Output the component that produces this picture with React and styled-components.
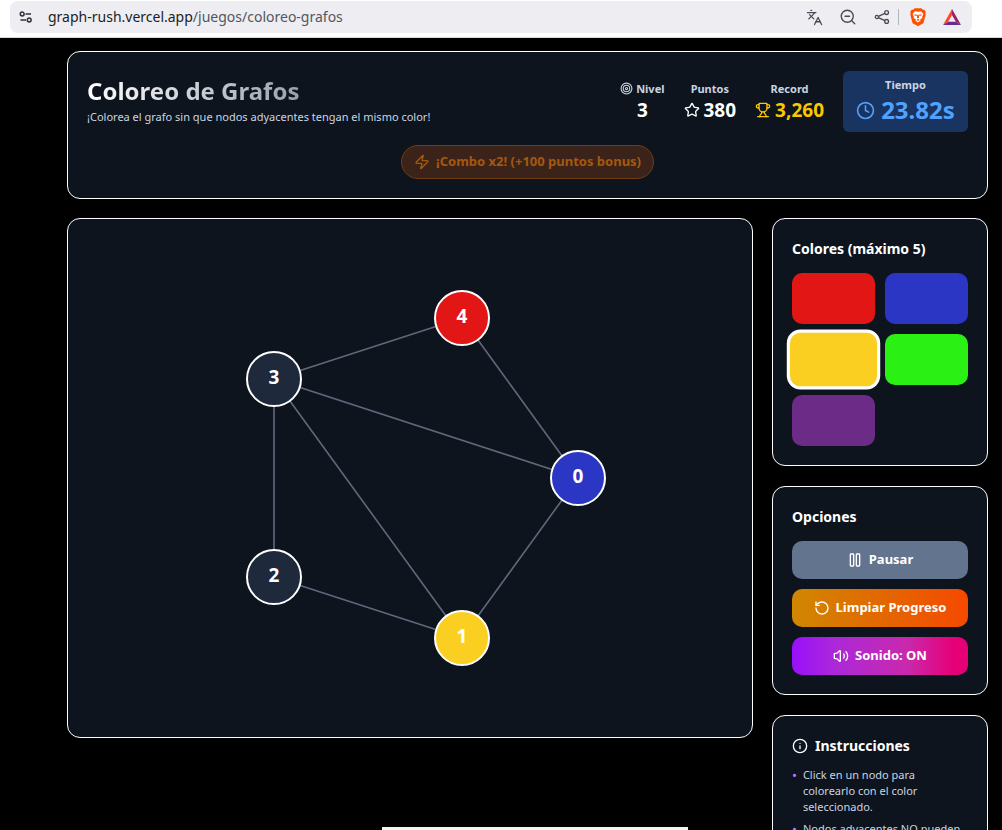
import React, { useState } from "react";
import styled, { createGlobalStyle, css } from "styled-components";
import {
  Target, Star, Trophy, Clock, Zap, Pause, RotateCcw, Volume2, Info,
  Languages, ZoomOut,
} from "lucide-react";

const GlobalStyle = createGlobalStyle`
  *, *::before, *::after { box-sizing: border-box; }
  body {
    margin: 0;
    background: #000;
    color: #fff;
    font-family: "Noto Sans", "Liberation Sans", sans-serif;
  }
  h1, h2, p, ul { margin: 0; padding: 0; }
  button { font: inherit; color: inherit; border: 0; padding: 0; cursor: pointer; }
  svg { flex: none; }
`;

const Screen = styled.div`
  position: relative;
  height: 100vh;
  overflow: hidden;
`;

const BrowserBar = styled.header`
  height: 38px;
  padding: 1px 30px 4px 10px;
  background: #fff;
  border-bottom: 1px solid #d8d8dc;
`;

const Address = styled.div`
  display: flex;
  align-items: center;
  height: 32px;
  padding: 0 12px 0 8px;
  border-radius: 8px;
  background: #ededf2;
  color: #4a4b52;
`;

const BarButton = styled.button`
  display: flex;
  align-items: center;
  justify-content: center;
  width: 16px;
  height: 24px;
  background: none;
`;

const Url = styled.a`
  flex: 1;
  margin-left: 14px;
  font-size: 14px;
  line-height: 20px;
  color: #55565d;
  text-decoration: none;
`;

const Host = styled.span`
  color: #1c1d22;
`;

const BarActions = styled.div`
  display: flex;
  align-items: center;
  gap: 18px;
`;

const BraveGroup = styled.div`
  display: flex;
  align-items: center;
  gap: 18px;
  height: 16px;
  margin-left: -10px;
  padding-left: 11px;
  border-left: 1px solid #b4b4bb;
`;

const Page = styled.main`
  display: flex;
  flex-direction: column;
  gap: 19px;
  padding: 13px 14px 0 67px;
`;

const Card = styled.section`
  border: 1px solid #fff;
  border-radius: 13px;
  background: #0d141d;
`;

const HeaderCard = styled(Card)`
  display: flex;
  flex-direction: column;
  gap: 13px;
  padding: 19px;
`;

const HeaderRow = styled.div`
  display: flex;
  align-items: center;
  justify-content: space-between;
`;

const Title = styled.h1`
  width: fit-content;
  font-size: 24px;
  line-height: 30px;
  font-weight: 700;
  background: linear-gradient(90deg, #fff, #99a1af);
  background-clip: text;
  color: transparent;
`;

const Subtitle = styled.p`
  font-size: 11px;
  line-height: 22px;
  color: #cad5e2;
`;

const Stats = styled.div`
  display: flex;
  align-items: center;
  gap: 19px;
`;

const Stat = styled.div`
  display: flex;
  flex-direction: column;
  align-items: center;
`;

const StatLabel = styled.div`
  display: flex;
  align-items: center;
  gap: 3px;
  font-size: 11px;
  line-height: 16px;
  font-weight: 700;
  color: #cad5e2;
`;

const StatValue = styled.div`
  display: flex;
  align-items: center;
  gap: 4px;
  font-size: 19px;
  line-height: 26px;
  font-weight: 700;
  color: ${(p) => p.$color || "#fff"};
`;

const Timer = styled(Stat)`
  min-width: 125px;
  padding: 6px 12px 5px;
  border-radius: 6px;
  background: #1a3461;
`;

const TimerValue = styled(StatValue)`
  gap: 6px;
  font-size: 24px;
  line-height: 34px;
  color: #51a2ff;
`;

const Combo = styled.div`
  display: flex;
  align-items: center;
  align-self: center;
  gap: 6px;
  height: 34px;
  padding: 0 12px;
  border: 1px solid #713c10;
  border-radius: 17px;
  background: #3c231a;
  color: #a4590f;
  font-size: 13px;
  line-height: 18px;
  font-weight: 700;
`;

const Caption = styled.span`
  padding-bottom: 2px;
`;

const Columns = styled.div`
  display: grid;
  grid-template-columns: 1fr 216px;
  gap: 19px;
  align-items: start;
`;

const Board = styled(Card)`
  position: relative;
  height: 520px;
`;

const Edges = styled.svg`
  position: absolute;
  left: 50%;
  top: 50%;
  width: 2px;
  height: 2px;
  overflow: visible;
  stroke: #62687c;
  stroke-width: 1.6;
`;

const Node = styled.button`
  position: absolute;
  left: calc(50% + ${(p) => p.$x}px);
  top: calc(50% + ${(p) => p.$y}px);
  width: 56px;
  height: 56px;
  padding-bottom: 4px;
  transform: translate(-50%, -50%);
  border: 2px solid #fff;
  border-radius: 50%;
  background: ${(p) => p.$fill};
  font-size: 19px;
  line-height: 26px;
  font-weight: 700;
`;

const Sidebar = styled.aside`
  display: flex;
  flex-direction: column;
  gap: 20px;
`;

const Panel = styled(Card)`
  padding: 19px;
`;

const PanelTitle = styled.h2`
  display: flex;
  align-items: center;
  gap: 7px;
  margin-bottom: ${(p) => (p.$tight ? 10 : 13)}px;
  font-size: 14px;
  line-height: 22px;
  font-weight: 700;
`;

const Swatches = styled.div`
  display: grid;
  grid-template-columns: 1fr 1fr;
  gap: 10px;
`;

const Swatch = styled.button`
  height: 51px;
  border-radius: 10px;
  background: ${(p) => p.$fill};
  ${(p) => p.$selected && css`
    transform: scale(1.05);
    box-shadow: 0 0 0 3px #fff;
  `}
`;

const Options = styled.div`
  display: flex;
  flex-direction: column;
  gap: 10px;
`;

const OptionButton = styled.button`
  display: flex;
  align-items: center;
  justify-content: center;
  gap: 6px;
  height: 38px;
  border-radius: 10px;
  background: ${(p) => p.$fill};
  font-size: 13px;
  line-height: 18px;
  font-weight: 700;
`;

const Steps = styled.ul`
  display: flex;
  flex-direction: column;
  gap: 6px;
  list-style: none;
  font-size: 11px;
  line-height: 16px;
  color: #cad5e2;
`;

const Step = styled.li`
  display: flex;
  gap: 6px;

  &::before {
    content: "•";
    width: 5px;
    font-size: 13px;
    color: #c27aff;
  }
`;

const BottomStrip = styled.div`
  position: absolute;
  left: 382px;
  right: 314px;
  bottom: 0;
  height: 3px;
  background: #f4f4f4;
`;

const COLORS = [
  ["Rojo", "#e11615"],
  ["Azul", "#2b36c4"],
  ["Amarillo", "#fbcf22"],
  ["Verde", "#2bf014"],
  ["Morado", "#6c2b86"],
];

const NODES = [
  { x: 168, y: 0, fill: "#2b36c4" },
  { x: 52, y: 160, fill: "#fbcf22" },
  { x: -136, y: 99, fill: "#1e293b" },
  { x: -136, y: -99, fill: "#1e293b" },
  { x: 52, y: -160, fill: "#e11615" },
];

const EDGES = [[3, 4], [4, 0], [3, 0], [3, 1], [3, 2], [2, 1], [0, 1]];

function SiteSettingsIcon() {
  return (
    <svg width="14" height="14" viewBox="0 0 14 14" fill="none" stroke="#303138" strokeWidth="1.5">
      <circle cx="3.2" cy="4" r="1.9" />
      <path d="M6.5 4H12M1.5 10H7" />
      <circle cx="10.2" cy="10" r="1.9" />
    </svg>
  );
}

function ShareIcon() {
  return (
    <svg width="16" height="16" viewBox="0 0 16 16" fill="none" stroke="currentColor" strokeWidth="1.3">
      <circle cx="12.6" cy="3.6" r="1.9" />
      <circle cx="12.6" cy="12.4" r="1.9" />
      <circle cx="2.9" cy="8" r="1.6" />
      <path d="M4.4 7.3 10.9 4.4M4.4 8.7l6.5 2.9" />
    </svg>
  );
}

function BraveIcon() {
  return (
    <svg width="16" height="18" viewBox="0 0 16 18">
      <path d="M4.6 0.3h6.8l1.4 1.5 1.6-.1 1.4 2.2-.5 1.4.4 1.5-2 7.4c-.2.7-.6 1.2-1.2 1.6L8.7 17.7a1.2 1.2 0 0 1-1.4 0l-3.8-1.9c-.6-.4-1-.9-1.2-1.6L.3 6.8l.4-1.5L.2 3.9l1.4-2.2 1.6.1z" fill="#ff5000" />
      <path d="M5 3.2 8 3.8l3-.6 2.4 2.9-1.3 2.7.3 1.3-2.2 1.2.4 1.1L8 14.6l-2.6-2.2.4-1.1-2.2-1.2.3-1.3-1.3-2.7z" fill="#fff" />
      <path d="M4.2 6.2 7 6.8 6.6 7.9 4.6 7.4zM11.8 6.2 9 6.8l.4 1.1 2-.5zM7.3 6.8h1.4l.4 2.9L8 10.6l-1.1-.9zM6.3 11.7 8 11l1.7.7L8 13z" fill="#ff5000" />
    </svg>
  );
}

function RewardsIcon() {
  return (
    <svg width="18" height="16" viewBox="0 0 18 16">
      <path d="M9 0 0 16 5.2 12.8 9 6Z" fill="#ff4724" />
      <path d="M9 0 18 16 12.8 12.8 9 6Z" fill="#9e1f63" />
      <path d="M0 16H18L12.8 12.8H5.2Z" fill="#662d91" />
    </svg>
  );
}

export default function App() {
  const [selected, setSelected] = useState(2);
  return (
    <Screen>
      <GlobalStyle />
      <BrowserBar>
        <Address>
          <BarButton aria-label="Información del sitio"><SiteSettingsIcon /></BarButton>
          <Url href="#"><Host>graph-rush.vercel.app</Host>/juegos/coloreo-grafos</Url>
          <BarActions>
            <BarButton aria-label="Traducir"><Languages size={17} strokeWidth={1.8} /></BarButton>
            <BarButton aria-label="Zoom"><ZoomOut size={18} strokeWidth={1.8} /></BarButton>
            <BarButton aria-label="Compartir"><ShareIcon /></BarButton>
            <BraveGroup>
              <BarButton aria-label="Brave Shields"><BraveIcon /></BarButton>
              <BarButton aria-label="Brave Rewards"><RewardsIcon /></BarButton>
            </BraveGroup>
          </BarActions>
        </Address>
      </BrowserBar>

      <Page>
        <HeaderCard>
          <HeaderRow>
            <div>
              <Title>Coloreo de Grafos</Title>
              <Subtitle>¡Colorea el grafo sin que nodos adyacentes tengan el mismo color!</Subtitle>
            </div>
            <Stats>
              <Stat>
                <StatLabel><Target size={13} />Nivel</StatLabel>
                <StatValue>3</StatValue>
              </Stat>
              <Stat>
                <StatLabel>Puntos</StatLabel>
                <StatValue><Star size={16} />380</StatValue>
              </Stat>
              <Stat>
                <StatLabel>Record</StatLabel>
                <StatValue $color="#fdc700"><Trophy size={16} />3,260</StatValue>
              </Stat>
              <Timer>
                <StatLabel>Tiempo</StatLabel>
                <TimerValue><Clock size={19} />23.82s</TimerValue>
              </Timer>
            </Stats>
          </HeaderRow>
          <Combo><Zap size={16} /><Caption>¡Combo x2! (+100 puntos bonus)</Caption></Combo>
        </HeaderCard>

        <Columns>
          <Board aria-label="Grafo">
            <Edges viewBox="0 0 2 2">
              {EDGES.map(([a, b]) => (
                <line key={`${a}-${b}`} x1={NODES[a].x} y1={NODES[a].y} x2={NODES[b].x} y2={NODES[b].y} />
              ))}
            </Edges>
            {NODES.map((n, i) => (
              <Node key={i} $x={n.x} $y={n.y} $fill={n.fill}>{i}</Node>
            ))}
          </Board>

          <Sidebar>
            <Panel>
              <PanelTitle>Colores (máximo 5)</PanelTitle>
              <Swatches>
                {COLORS.map(([name, fill], i) => (
                  <Swatch
                    key={name}
                    aria-label={name}
                    aria-pressed={i === selected}
                    $fill={fill}
                    $selected={i === selected}
                    onClick={() => setSelected(i)}
                  />
                ))}
              </Swatches>
            </Panel>
            <Panel>
              <PanelTitle>Opciones</PanelTitle>
              <Options>
                <OptionButton $fill="#62748e"><Pause size={16} /><Caption>Pausar</Caption></OptionButton>
                <OptionButton $fill="linear-gradient(90deg, #d08700, #f54900)"><RotateCcw size={16} /><Caption>Limpiar Progreso</Caption></OptionButton>
                <OptionButton $fill="linear-gradient(90deg, #9810fa, #ad28d8 25%, #c829ad 65%, #e60076 92%)"><Volume2 size={16} /><Caption>Sonido: ON</Caption></OptionButton>
              </Options>
            </Panel>
            <Panel>
              <PanelTitle $tight><Info size={16} />Instrucciones</PanelTitle>
              <Steps>
                <Step>Click en un nodo para colorearlo con el color seleccionado.</Step>
                <Step>Nodos adyacentes NO pueden</Step>
              </Steps>
            </Panel>
          </Sidebar>
        </Columns>
      </Page>
      <BottomStrip />
    </Screen>
  );
}
